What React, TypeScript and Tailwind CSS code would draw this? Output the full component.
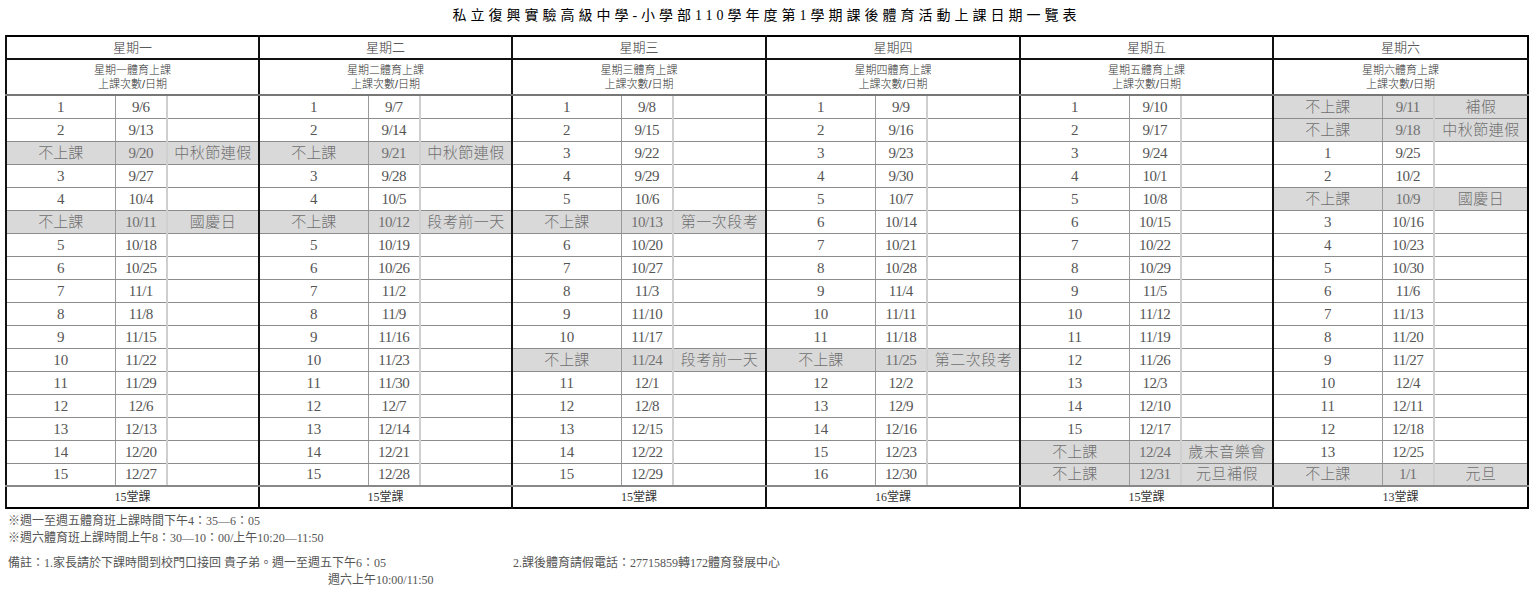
import React from 'react';

type Day = {
  name: string;
  width: number;
  rows: string[];
  total: string;
};

// each row: "count|date|note" — a note means the class is off that day
const days: Day[] = [
  {
    name: '星期一',
    width: 253,
    total: '15堂課',
    rows: [
      '1|9/6', '2|9/13', '不上課|9/20|中秋節連假', '3|9/27', '4|10/4', '不上課|10/11|國慶日',
      '5|10/18', '6|10/25', '7|11/1', '8|11/8', '9|11/15', '10|11/22', '11|11/29', '12|12/6',
      '13|12/13', '14|12/20', '15|12/27',
    ],
  },
  {
    name: '星期二',
    width: 253,
    total: '15堂課',
    rows: [
      '1|9/7', '2|9/14', '不上課|9/21|中秋節連假', '3|9/28', '4|10/5', '不上課|10/12|段考前一天',
      '5|10/19', '6|10/26', '7|11/2', '8|11/9', '9|11/16', '10|11/23', '11|11/30', '12|12/7',
      '13|12/14', '14|12/21', '15|12/28',
    ],
  },
  {
    name: '星期三',
    width: 254,
    total: '15堂課',
    rows: [
      '1|9/8', '2|9/15', '3|9/22', '4|9/29', '5|10/6', '不上課|10/13|第一次段考', '6|10/20',
      '7|10/27', '8|11/3', '9|11/10', '10|11/17', '不上課|11/24|段考前一天', '11|12/1', '12|12/8',
      '13|12/15', '14|12/22', '15|12/29',
    ],
  },
  {
    name: '星期四',
    width: 254,
    total: '16堂課',
    rows: [
      '1|9/9', '2|9/16', '3|9/23', '4|9/30', '5|10/7', '6|10/14', '7|10/21', '8|10/28', '9|11/4',
      '10|11/11', '11|11/18', '不上課|11/25|第二次段考', '12|12/2', '13|12/9', '14|12/16',
      '15|12/23', '16|12/30',
    ],
  },
  {
    name: '星期五',
    width: 253,
    total: '15堂課',
    rows: [
      '1|9/10', '2|9/17', '3|9/24', '4|10/1', '5|10/8', '6|10/15', '7|10/22', '8|10/29', '9|11/5',
      '10|11/12', '11|11/19', '12|11/26', '13|12/3', '14|12/10', '15|12/17',
      '不上課|12/24|歲末音樂會', '不上課|12/31|元旦補假',
    ],
  },
  {
    name: '星期六',
    width: 255,
    total: '13堂課',
    rows: [
      '不上課|9/11|補假', '不上課|9/18|中秋節連假', '1|9/25', '2|10/2', '不上課|10/9|國慶日',
      '3|10/16', '4|10/23', '5|10/30', '6|11/6', '7|11/13', '8|11/20', '9|11/27', '10|12/4',
      '11|12/11', '12|12/18', '13|12/25', '不上課|1/1|元旦',
    ],
  },
];

const serif = "[font-family:'Liberation_Serif','Noto_Sans_CJK_TC',serif]";
const sans = "[font-family:'Liberation_Sans','Noto_Sans_CJK_TC',sans-serif]";

export default function App() {
  const rowCount = days[0].rows.length;

  return (
    <div className="w-[1533px] h-[591px] bg-white overflow-hidden text-[#222]">
      <h1 className="pt-[5px] h-[35px] text-center text-[14px] font-normal tracking-[4px] [font-family:'Liberation_Serif','Noto_Sans_CJK_TC',serif] text-black">
        私立復興實驗高級中學-小學部110學年度第1學期課後體育活動上課日期一覽表
      </h1>

      <table className="ml-[5px] table-fixed border-collapse border-2 border-black w-[1522px]">
        <colgroup>
          {days.map((d) => (
            <React.Fragment key={d.name}>
              <col className="w-[109px]" />
              <col className="w-[52px]" />
              <col style={{ width: d.width - 161 }} />
            </React.Fragment>
          ))}
        </colgroup>
        <thead>
          <tr className="h-[23px]">
            {days.map((d) => (
              <th
                key={d.name}
                colSpan={3}
                className={`border-l-2 border-l-[#111] border-b-2 border-b-[#111] text-[13px] font-light text-[#333] ${sans}`}
              >
                {d.name}
              </th>
            ))}
          </tr>
          <tr className="h-[36px]">
            {days.map((d) => (
              <th
                key={d.name}
                colSpan={3}
                className={`border-l-2 border-l-[#111] border-b-2 border-b-[#777] text-[11px] leading-[14px] font-light text-[#333] ${sans}`}
              >
                {d.name}體育上課
                <br />
                上課次數/日期
              </th>
            ))}
          </tr>
        </thead>
        <tbody>
          {Array.from({ length: rowCount }).map((_, r) => (
            <tr key={r} className="h-[23px]">
              {days.map((d) => {
                const [count, date, note] = d.rows[r].split('|');
                const off = Boolean(note);
                const bg = off ? 'bg-[#d9d9d9] text-[#707070]' : 'text-[#555]';
                const line = r === rowCount - 1 ? 'border-b-2 border-b-[#888]' : 'border-b border-b-[#8c8c8c]';
                return (
                  <React.Fragment key={d.name}>
                    <td
                      className={`border-l-2 border-l-[#111] border-r border-r-[#9a9a9a] ${line} ${bg} text-center text-[15px] leading-[18px] p-0 font-light ${serif}`}
                    >
                      {count}
                    </td>
                    <td
                      className={`border-r-2 border-r-[#cfcfcf] ${line} ${bg} text-center text-[15px] leading-[18px] p-0 tracking-[-0.5px] ${serif}`}
                    >
                      {date}
                    </td>
                    <td
                      className={`${line} ${bg} text-center text-[15px] leading-[18px] p-0 whitespace-nowrap overflow-hidden font-light tracking-[0.5px] ${serif}`}
                    >
                      {note}
                    </td>
                  </React.Fragment>
                );
              })}
            </tr>
          ))}
        </tbody>
        <tfoot>
          <tr className="h-[22px]">
            {days.map((d) => (
              <td
                key={d.name}
                colSpan={3}
                className={`border-l-2 border-l-[#111] text-center text-[12px] text-[#333] ${serif}`}
              >
                {d.total}
              </td>
            ))}
          </tr>
        </tfoot>
      </table>

      <div className={`pl-[8px] pt-[4px] text-[12px] leading-[17px] text-[#555] ${serif}`}>
        <p>※週一至週五體育班上課時間下午4：35—6：05</p>
        <p>※週六體育班上課時間上午8：30—10：00/上午10:20—11:50</p>
        <div className="flex mt-[8px]">
          <div className="w-[505px]">
            <p>備註：1.家長請於下課時間到校門口接回 貴子弟。週一至週五下午6：05</p>
            <p className="pl-[320px]">週六上午10:00/11:50</p>
          </div>
          <p>2.課後體育請假電話：27715859轉172體育發展中心</p>
        </div>
      </div>
    </div>
  );
}
